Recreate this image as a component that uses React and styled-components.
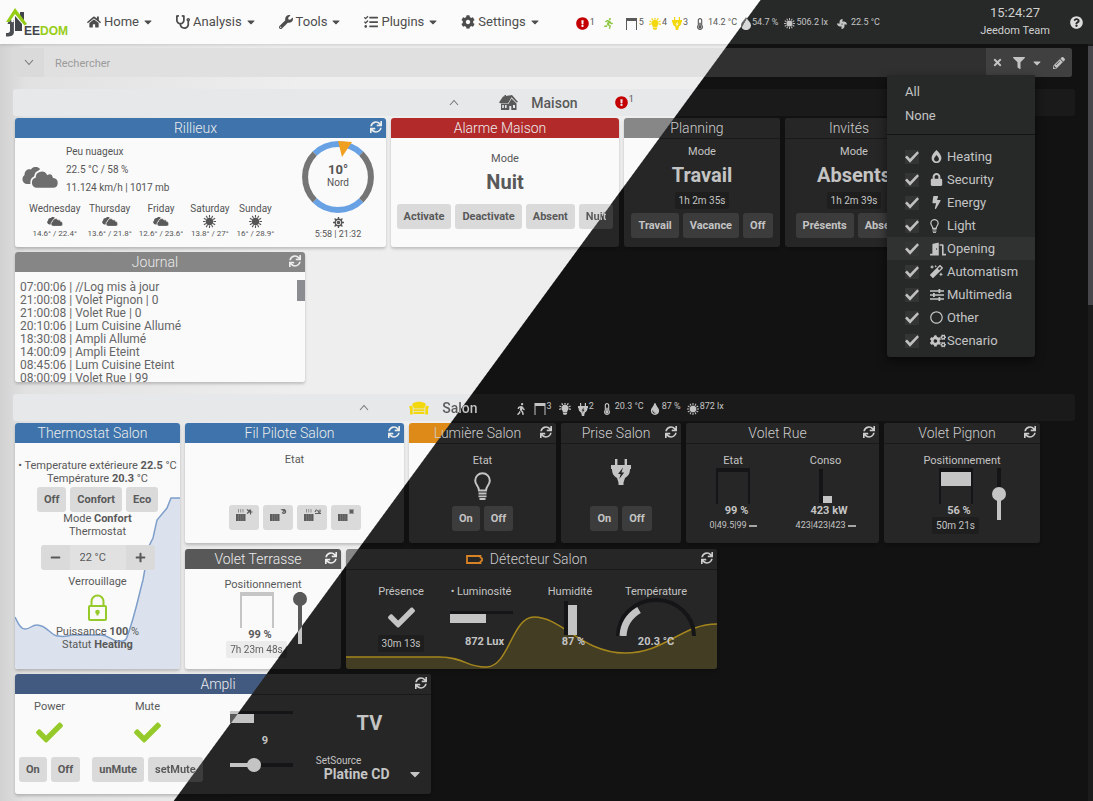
import React from "react";
import styled, { createGlobalStyle, css } from "styled-components";
import {
  FaHome, FaStethoscope, FaWrench, FaTasks, FaCog, FaCaretDown, FaExclamationCircle,
  FaRunning, FaWalking, FaThermometerHalf, FaTint, FaFan, FaQuestionCircle, FaTimes,
  FaFilter, FaPencilAlt, FaLock, FaBolt, FaDoorOpen, FaMagic, FaRegCircle, FaCogs,
  FaSync, FaCheck, FaBurn, FaMinus, FaPlus,
} from "react-icons/fa";

/* Both themes share one diagonal, anchored to the window's top left corner. */
const split = (light, dark) =>
  `linear-gradient(126.23deg, ${light} 613px, ${dark} 614px) fixed`;

const ink = { light: "#595959", dark: "#c4c4c4" };
const tone = css`color: ${(p) => p.$color || (p.$dark ? ink.dark : ink.light)};`;

const GlobalStyle = createGlobalStyle`
  *, *::before, *::after { box-sizing: border-box; }
  body {
    margin: 0;
    font: 400 11px/13px Roboto, "Liberation Sans", sans-serif;
    color: ${ink.light};
    background:
      linear-gradient(90deg, rgba(60, 62, 68, 0.16), rgba(60, 62, 68, 0.07) 26px, transparent 300px) fixed,
      ${split("#eeeeee", "#121212")};
  }
  button, input, select { font: inherit; color: inherit; margin: 0; }
  svg { display: block; flex: none; }
`;

/* ---------- page frame ---------- */
const Page = styled.div`
  min-height: 100vh;
  display: flex;
  flex-direction: column;
`;

const TopBar = styled.header`
  display: flex;
  align-items: center;
  height: 44px;
  padding: 0 10px 0 6px;
  background: ${split("#fbfbfb", "#272929")};
  box-shadow: 0 1px 3px rgba(0, 0, 0, 0.15);
`;

const Content = styled.div`
  flex: 1;
  display: flex;
`;

const Main = styled.main`
  flex: 1;
  min-width: 0;
  padding: 4px 13px 7px;
`;

const ScrollTrack = styled.div`
  width: 5px;
  padding-top: 2px;
  background: #1b1b1b;
`;

const ScrollThumb = styled.div`
  height: 259px;
  background: #47474b;
`;

/* ---------- top bar ---------- */
const Logo = styled.a`
  display: flex;
  align-items: flex-end;
  width: 62px;
  height: 29px;
  margin-right: 19px;
  text-decoration: none;
  font: 700 12px/12px "Liberation Sans", sans-serif;
  color: #414449;
  svg { margin-right: -4px; }
`;
const LogoGreen = styled.span`color: #96cd16;`;

const Nav = styled.nav`
  display: flex;
  gap: 22px;
`;

const NavLink = styled.a`
  display: flex;
  align-items: center;
  gap: 3px;
  font-size: 13px;
  line-height: 16px;
  color: #4d4d4d;
  text-decoration: none;
`;

const StatusBar = styled.div`
  display: flex;
  align-items: center;
  gap: ${(p) => p.$gap}px;
  margin-left: ${(p) => p.$ml || 0}px;
  padding-top: 3px;
`;

const Status = styled.span`
  display: flex;
  align-items: center;
  gap: ${(p) => p.$gap || 1}px;
  font-size: 9px;
  line-height: 11px;
  ${tone}
`;
const StatusValue = styled.span`
  margin-bottom: ${(p) => (p.$up ? 6 : 2)}px;
  color: ${(p) => (p.$dark ? ink.dark : ink.light)};
`;

const Clock = styled.div`
  margin-left: auto;
  text-align: center;
  line-height: 18px;
  color: #cfcfcf;
`;
const ClockTime = styled.div`font-size: 13px;`;
const ClockUser = styled.div`font-size: 11px;`;

const HelpButton = styled.button`
  margin-left: 20px;
  padding: 0;
  border: 0;
  background: none;
  color: #dcdcdc;
`;

/* ---------- search ---------- */
const SearchBar = styled.form`
  display: flex;
  height: 29px;
  margin-right: 3px;
  border-radius: 3px;
  background: ${split("#e0e0e0", "#303030")};
`;
const ExpandButton = styled.button`
  display: flex;
  align-items: center;
  justify-content: center;
  width: 31px;
  padding: 0;
  border: 0;
  border-radius: 3px 0 0 3px;
  background: #dadada;
`;
const SearchInput = styled.input`
  flex: 1;
  min-width: 0;
  padding: 1px 11px 0;
  border: 0;
  background: none;
  &::placeholder { color: #9b9b9b; opacity: 1; }
`;
const SearchTools = styled.div`
  position: relative;
  display: flex;
  align-items: center;
  width: 86px;
  padding: 0 7px 0 6px;
  justify-content: space-between;
  border-radius: 0 3px 3px 0;
  background: #404040;
  color: ${ink.dark};
`;
const ToolButton = styled.button`
  display: flex;
  align-items: center;
  gap: 6px;
  padding: 0;
  border: 0;
  background: none;
`;

const Menu = styled.div`
  position: absolute;
  z-index: 5;
  top: 27px;
  right: 37px;
  width: 148px;
  padding-bottom: 5px;
  background: #272929;
  border-radius: 0 0 3px 3px;
  box-shadow: 0 4px 10px rgba(0, 0, 0, 0.55);
  font-size: 13px;
`;
const MenuTop = styled.div`
  display: flex;
  flex-direction: column;
  padding: 4px 0 7px;
  margin-bottom: 10px;
  border-bottom: 1px solid #131515;
`;
const MenuButton = styled.button`
  height: 24px;
  padding: 0 18px;
  border: 0;
  background: none;
  text-align: left;
`;
const MenuRow = styled.label`
  display: grid;
  grid-template-columns: 25px 17px 1fr;
  align-items: center;
  height: 23px;
  padding-left: 18px;
  white-space: nowrap;
  background: ${(p) => (p.$active ? "#303131" : "none")};
`;
const CheckBox = styled.input.attrs({ type: "checkbox", defaultChecked: true })`
  appearance: none;
  width: 14px;
  height: 14px;
  background: #333434;
  &:checked::before {
    content: "";
    display: block;
    width: 14px;
    height: 14px;
    background: #c0c0c0;
    clip-path: polygon(0 55%, 14% 42%, 36% 66%, 88% 12%, 100% 25%, 36% 94%);
  }
`;

/* ---------- sections and tiles ---------- */
const SectionBar = styled.div`
  display: flex;
  align-items: center;
  justify-content: center;
  height: 27px;
  margin-top: 12px;
  padding-right: 5px;
  border-radius: 3px;
  background: ${split("#e7e8ea", "#1a1a1a")};
`;
const SectionName = styled.h2`
  margin: 0 37px 0 13px;
  font-size: 14px;
  font-weight: 500;
  line-height: 18px;
`;
const CollapseButton = styled.button`
  margin-right: 40px;
  padding: 0;
  border: 0;
  background: none;
`;

const Tiles = styled.div`
  display: flex;
  flex-wrap: ${(p) => (p.$nowrap ? "nowrap" : "wrap")};
  gap: 5px;
  padding: ${(p) => p.$pad || "0"};
`;
const TileRows = styled.div`
  display: flex;
  flex-direction: column;
  gap: 6px;
`;

const Tile = styled.section`
  position: relative;
  display: flex;
  flex-direction: column;
  flex: none;
  width: ${(p) => p.$w}px;
  height: ${(p) => p.$h || 120}px;
  border-radius: 3px;
  overflow: hidden;
  background: ${split("#fafafa", "#262626")};
  box-shadow: 0 2px 3px rgba(0, 0, 0, 0.2);
  ${tone}
`;
const TileHead = styled.header`
  position: relative;
  flex: none;
  display: flex;
  align-items: center;
  justify-content: center;
  height: 21px;
  padding-right: 10px;
  border-bottom: 1px solid transparent;
  background: ${(p) => split(p.$color, "#262626")};
  background-clip: padding-box;
`;
const HeadRule = styled.div`
  flex: none;
  height: 1px;
  margin-top: -1px;
  background: ${split("#fafafa", "#191919")};
`;
const TileTitle = styled.h3`
  display: flex;
  align-items: center;
  gap: 7px;
  margin: 0;
  font-size: 14px;
  line-height: 20px;
  font-weight: 300;
  color: ${(p) => (p.$dark ? "#cdcdcd" : "#ececec")};
`;
const RefreshButton = styled.button`
  position: absolute;
  right: 4px;
  top: 3px;
  padding: 0;
  border: 0;
  background: none;
  color: ${(p) => (p.$dark ? "#cdcdcd" : "#ececec")};
`;
const Body = styled.div`
  position: relative;
  flex: 1;
  min-height: 0;
  display: flex;
  flex-direction: column;
  align-items: center;
  padding: ${(p) => p.$pt || 0}px 0 ${(p) => p.$pb || 0}px;
`;

const Label = styled.span`white-space: nowrap;`;
const Big = styled.strong`
  margin: 5px 0;
  font-size: 20px;
  line-height: 24px;
  font-weight: 700;
`;
const Badge = styled.span`
  height: 17px;
  padding: 0 4px;
  border-radius: 2px;
  font-size: 10px;
  line-height: 17px;
  white-space: nowrap;
  background: ${split("#ececec", "#1e1e1e")};
`;
const Reading = styled.strong`
  padding-left: 7px;
  font-weight: 700;
  white-space: nowrap;
`;
const Stat = styled.span`
  display: flex;
  align-items: center;
  gap: 2px;
  margin-top: 2px;
  font-size: 9px;
`;
const Dash = styled.span`
  width: 8px;
  height: 2px;
  background: #a5a5a5;
`;
const SplitText = styled.span`
  background: ${split(ink.light, ink.dark)};
  background-clip: text;
  -webkit-background-clip: text;
  color: transparent;
`;
const Buttons = styled.div`
  display: flex;
  gap: 4px;
  margin-top: ${(p) => (p.$flow ? "2px" : "auto")};
`;
const Action = styled.button`
  height: 25px;
  padding: 0 7px;
  border: 0;
  border-radius: 3px;
  font-weight: 700;
  background: ${split("#dadada", "#3c3c3c")};
`;
const IconAction = styled(Action)`
  width: 30px;
  padding: 0 6px 4px;
`;

/* ---------- widgets ---------- */
const ShutterBox = styled.div`
  width: 34px;
  height: 36px;
  border: solid ${(p) => (p.$dark ? "#151517" : "#c5c5c5")};
  border-width: 4px 2px 0;
`;
const ShutterFill = styled.div`
  height: 14px;
  background: ${ink.dark};
`;
const VBar = styled.div`
  display: flex;
  align-items: flex-end;
`;
const VTrack = styled.div`
  width: 4px;
  height: 34px;
  background: #151517;
`;
const VFill = styled.div`
  width: 9px;
  height: ${(p) => p.$h}px;
  background: ${ink.dark};
`;
const HBar = styled.div`width: 63px;`;
const HTrack = styled.div`
  height: 3px;
  background: ${split("#c5c5c5", "#151517")};
`;
const HFill = styled.div`
  width: ${(p) => p.$w}px;
  height: 9px;
  background: ${split(ink.light, ink.dark)};
`;
const Range = styled.input.attrs({ type: "range" })`
  appearance: none;
  width: 63px;
  height: 14px;
  background: linear-gradient(90deg, ${ink.dark} 24px, #151517 24px) center / 100% 4px no-repeat;
  &::-webkit-slider-thumb {
    appearance: none;
    width: 14px;
    height: 14px;
    border-radius: 50%;
    background: ${ink.dark};
  }
`;
const VRangeShell = styled.div`
  display: flex;
  justify-content: center;
  width: 14px;
  height: 52px;
  background: ${(p) => p.$track};
  background-clip: content-box;
  padding: 0 5px;
`;
const VRange = styled.input.attrs({ type: "range" })`
  appearance: none;
  flex: none;
  writing-mode: vertical-lr;
  direction: rtl;
  width: 14px;
  height: 52px;
  background: none;
  &::-webkit-slider-thumb {
    appearance: none;
    width: 14px;
    height: 14px;
    border-radius: 50%;
    background: ${(p) => (p.$dark ? ink.dark : ink.light)};
  }
`;
const CoverRow = styled.div`
  display: flex;
  gap: 5px;
  padding-left: 6px;
  margin-top: 1px;
`;
const CoverCol = styled.div`
  display: flex;
  flex-direction: column;
  align-items: center;
  width: 62px;
`;
const Columns = styled.div`
  display: flex;
  gap: 39px;
`;
const Column = styled.div`
  display: flex;
  flex-direction: column;
  align-items: center;
`;
const SensorGrid = styled.div`
  position: relative;
  align-self: stretch;
  display: grid;
  grid-template-columns: 80px 80px 98px 74px;
  padding-left: 15px;
`;
const GaugeArea = styled.div`
  display: flex;
  align-items: ${(p) => p.$align || "center"};
  justify-content: center;
  height: 37px;
`;

const Chart = styled.svg`
  position: absolute;
  left: 0;
  bottom: 0;
`;

/* weather */
const WeatherBody = styled.div`
  display: flex;
  justify-content: space-between;
  padding: 2px 12px 0 7px;
  color: #555;
`;
const WeatherNow = styled.div`
  display: flex;
  align-items: center;
  gap: 7px;
  padding-top: 2px;
  font-size: 10px;
  line-height: 18px;
  svg { margin-top: 16px; }
`;
const Forecast = styled.div`
  display: flex;
  gap: 7px;
  padding: 6px 0 0 7px;
`;
const Day = styled.div`
  display: flex;
  flex-direction: column;
  align-items: center;
  font-size: 10px;
  line-height: 12px;
`;
const DayIcon = styled.span`
  display: flex;
  align-items: center;
  height: 13px;
`;
const DayTemp = styled.span`font-size: 8px;`;
const WindCol = styled.div`
  display: flex;
  flex-direction: column;
  align-items: center;
  font-size: 9px;
`;
const Compass = styled.div`
  display: grid;
  width: 72px;
  height: 72px;
  margin-bottom: 4px;
  > * { grid-area: 1 / 1; }
`;
const CompassText = styled.div`
  align-self: center;
  padding-bottom: 2px;
  text-align: center;
  font-size: 10px;
  line-height: 12px;
  b { display: block; font-size: 13px; line-height: 14px; }
`;

/* journal */
const LogBody = styled.div`
  display: flex;
  justify-content: space-between;
  align-items: flex-start;
  flex: 1;
  min-height: 0;
  padding: 7px 0 0 5px;
`;
const Log = styled.ul`
  margin: 0;
  padding: 1px 0 0;
  list-style: none;
  font-size: 12px;
  line-height: 13px;
  color: #666;
`;
const LogThumb = styled.div`
  width: 8px;
  height: 21px;
  background: #8b8b92;
`;

/* thermostat */
const Stepper = styled.div`
  display: flex;
  width: 114px;
  height: 25px;
  margin: 7px 0 5px;
  border-radius: 3px;
  overflow: hidden;
`;
const StepButton = styled.button`
  display: flex;
  align-items: center;
  justify-content: center;
  width: 29px;
  padding: 0;
  border: 0;
  background: #dadada;
`;
const StepValue = styled.input`
  flex: 1;
  min-width: 0;
  padding: 0 12px 0 10px;
  border: 0;
  background: #e1e1e1;
`;
const Block = styled.div`
  display: flex;
  flex-direction: column;
  align-items: center;
  svg { margin: 6px 0 4px; }
`;

/* amplifier */
const AmpBody = styled.div`
  display: flex;
  flex: 1;
  padding: 5px 8px 12px 4px;
`;
const AmpCol = styled.div`
  display: flex;
  flex-direction: column;
  align-items: center;
  margin-right: ${(p) => p.$mr || 0}px;
  ${tone}
`;
const CheckMark = styled.span`
  display: flex;
  margin-top: ${(p) => (p.$green ? 6 : 2)}px;
  color: ${(p) => (p.$green ? "#96ca2a" : ink.dark)};
`;
const Volume = styled(AmpCol)`
  padding: 11px 0 1px;
  gap: 11px;
`;
const Source = styled(AmpCol)`
  padding-top: 6px;
  width: 109px;
`;
const SourceLabel = styled.label`
  align-self: flex-start;
  margin-top: 16px;
  font-size: 10px;
  line-height: 10px;
`;
const SourceRow = styled.div`
  display: flex;
  align-items: center;
  justify-content: space-between;
  align-self: stretch;
  height: 16px;
  padding-left: 8px;
`;
const SourceSelect = styled.select`
  appearance: none;
  flex: 1;
  min-width: 0;
  height: 16px;
  padding: 0;
  border: 0;
  background: none;
  font-size: 14px;
  line-height: 16px;
  font-weight: 700;
`;

/* ---------- drawings ---------- */
const Chevron = ({ down }) => (
  <svg width="10" height="7" viewBox="0 0 10 7" fill="none" stroke="#777" strokeWidth="1.1">
    <path d={down ? "M1 1l4 4.5L9 1" : "M1 6l4-4.5L9 6"} />
  </svg>
);
const LogoMark = () => (
  <svg width="22" height="29" viewBox="0 0 22 29">
    <path d="M14 4h4v11l-4-5z" fill="#414449" />
    <path d="M9 8l7 8v7H9z" fill="#414449" />
    <path d="M3 12h5v11c0 4.500-2 5.500-8 5.500V25c3 0 4-.500 4-2.500V16H1.500z" fill="#4b4e53" />
    <path d="M0 14L9 0l12 16-2.500 1.500L9 6 3.500 14z" fill="#96cd16" />
    <circle cx="6.500" cy="13" r="1.300" fill="#fff" />
    <path d="M8.400 15v9" stroke="#fff" strokeWidth=".9" />
  </svg>
);
const ShutterIcon = ({ s = 11 }) => (
  <svg width={s} height="12" viewBox="0 0 11 12" fill="currentColor">
    <path d="M0 0h11v3H0z" /><path d="M0 3h1v9H0zM10 3h1v9h-1z" />
  </svg>
);
const rays = [0, 30, 60, 90, 120, 150, 180, 210, 240, 270, 300, 330];
const SunIcon = ({ s = 12, r = 6.5 }) => (
  <svg width={s} height={s} viewBox="0 0 24 24" fill="currentColor">
    <circle cx="12" cy="12" r={r} />
    {rays.map((a) => (
      <path key={a} d="M11 0h2v4.4h-2z" transform={`rotate(${a} 12 12)`} />
    ))}
  </svg>
);
const SunriseIcon = () => (
  <svg width="11" height="11" viewBox="0 0 24 24" fill="none" stroke="currentColor" strokeWidth="3">
    <circle cx="12" cy="12" r="7" /><circle cx="12" cy="12" r="2.4" fill="currentColor" />
    {[0, 45, 90, 135, 180, 225, 270, 315].map((a) => (
      <path key={a} d="M12 0v5" transform={`rotate(${a} 12 12)`} />
    ))}
  </svg>
);
const GlowBulb = ({ s = 12 }) => (
  <svg width={s} height={s} viewBox="0 0 24 24" fill="currentColor">
    <path d="M12 3a7.500 7.500 0 0 0-4.500 13.300V19h9v-2.700A7.500 7.500 0 0 0 12 3z" />
    <path d="M8 20h8v1.800H8zM9 22.300h6V24H9z" />
    {[-100, -68, -34, 0, 34, 68, 100].map((a) => (
      <path key={a} d="M10.700 -1.500h2.600v4h-2.600z" transform={`rotate(${a} 12 10.500)`} />
    ))}
  </svg>
);
const OutlineBulb = ({ w = 17, h = 28, sw = 2 }) => (
  <svg width={w} height={h} viewBox="0 0 17 28" fill="none" stroke="currentColor" strokeWidth={sw}>
    <path d="M5 18.500C5 14 1.200 13 1.200 8.500a7.300 7.300 0 0 1 14.600 0C15.800 13 12 14 12 18.500z" />
    <path d="M4.500 21.500h8M4.500 24.300h8M5.500 27h6" strokeWidth="1.800" />
  </svg>
);
const PlugIcon = ({ w = 11, hole = "#262626" }) => (
  <svg width={w} height={w * 1.3} viewBox="0 0 20 26" fill="currentColor">
    <path d="M4 0h2.400v7H4zM13.600 0H16v7h-2.400z" />
    <path d="M0 6h20v4h-1c0 5-2 7-5 9l-1.500 4.500V26h-5v-2.500L6 19C3 17 1 15 1 10H0z" />
    <path d="M12 8.500l-5 6.500h2.700l-1.500 5 5-6.500h-2.700z" fill={hole} />
  </svg>
);
const SplitDrop = () => (
  <svg width="10" height="13" viewBox="0 0 10 13">
    <defs>
      <linearGradient id="drop" x1="0" y1="0" x2="1" y2="0.73">
        <stop offset="0.42" stopColor="#666" /><stop offset="0.46" stopColor="#d8d8d8" />
      </linearGradient>
    </defs>
    <path d="M5 0c1 3 5 5 5 8.500A4.500 4.500 0 0 1 5 13a4.500 4.500 0 0 1-5-4.500C0 5 4 3 5 0z" fill="url(#drop)" />
  </svg>
);
const Clouds = ({ w, c = "#6e6e6e" }) => (
  <svg width={w} height={w * 0.6} viewBox="0 0 37 22" fill={c}>
    <path d="M9 17H5a5 5 0 0 1-2.500-9C2.500 3.500 6 1.500 9 2.500c2-3.500 7-3.500 9-.5L10 12z" />
    <path
      d="M14 21.500a6 6 0 0 1-1-11.500c0-7 10-8.500 12.500-3 3-1.500 5.500 0 6 3C38.500 11 38 21.500 31 21.500z"
      stroke="#fafafa" strokeWidth="1.600"
    />
  </svg>
);
const HouseIcon = () => (
  <svg width="19" height="15" viewBox="0 0 19 15" fill="currentColor">
    <path d="M0 7.500L4 1.500l1.500-.3V0H7v1l6-1 6 7-1.500.5-5-5.200L9 8.500H2z" />
    <path d="M12.500 3.500L17.500 8.500V15h-5.200v-4h-2v4H2V9h7.500z" />
    <path d="M3.200 10h1.600v3H3.200zM6 10h1.600v3H6zM14 10h2v3h-2z" fill="#e7e8ea" />
  </svg>
);
const SofaIcon = () => (
  <svg width="20" height="14" viewBox="0 0 20 14" fill="#f2d80c">
    <path d="M3.500 5V2.500C7 0 13 0 16.500 2.500V5l-1 1v1.500h-11V6z" />
    <path d="M0 5.500l2.500-1 1.200 1.500v7.500H1V8zM20 5.500l-2.500-1L16.300 6v7.500H19V8z" />
    <path d="M4.500 8.300h11v1.700h-11zM4.500 10.800h11V13h-11z" />
  </svg>
);
const LevelsIcon = () => (
  <svg width="14" height="12" viewBox="0 0 14 12" fill="currentColor">
    <path d="M0 1.300h14v1.400H0zM0 5.300h14v1.400H0zM0 9.300h14v1.400H0z" />
    <path d="M8.500 0h1.800v4H8.500zM3 4h1.800v4H3zM8.500 8h1.800v4H8.500z" />
  </svg>
);
const PadlockIcon = () => (
  <svg width="19" height="27" viewBox="0 0 19 27" fill="none" stroke="#96ca2a" strokeWidth="2">
    <path d="M3.500 12V7.500a6 6 0 0 1 12 0V12" />
    <rect x="1" y="12" width="17" height="14" rx="1" />
    <circle cx="9.500" cy="18" r="1.300" fill="#96ca2a" />
    <path d="M9.500 18v3.500" />
  </svg>
);
const marks = {
  comfort: "M12 .5l2.500 2-2.500 2M15 .5l-1.500 2.500H17.500M15.500 .5v5",
  night: "M13 .8c2.500-1 4 .5 3.500 2.500-.5 1.500-2.500 1.500-3 .5l2-2z",
  eco: "M12 4.500h6M13.500 .5l-1.500 2.500M14.500 1l2 3.500M17 .5v3",
  frost: "M12.500 .5l4 4M16.500 .5l-4 4M12.500 2.500h4M14.500 .5v4",
};
const HeaterIcon = ({ kind }) => (
  <svg width="18" height="13" viewBox="0 0 18 13" stroke="#5d5d5d" fill="none">
    <path d="M1 5h9.500v7H1z" fill="#5d5d5d" stroke="none" />
    <path d="M3.500 5v7M5.700 5v7M8 5v7" stroke="#8f8f8f" strokeWidth=".5" />
    {(kind === "comfort" || kind === "eco") && <path d="M3.500 0v3.500M5.700 0v3.500M8 0v3.500" strokeWidth=".6" />}
    <path d={marks[kind]} strokeWidth="1.200" />
  </svg>
);
const BatteryIcon = () => (
  <svg width="17" height="9" viewBox="0 0 17 9" fill="none" stroke="#d78225" strokeWidth="1.800">
    <path d="M1 1h13.500v1.500L16 3.500v2l-1.500 1V8H1z" />
  </svg>
);
const CompassRing = () => (
  <svg width="72" height="72" viewBox="0 0 72 72" fill="none" strokeWidth="6">
    <path d="M12.700 12.700a33 33 0 0 1 46.600 0M12.700 59.300a33 33 0 0 0 46.600 0" stroke="#68a1e4" />
    <path d="M12.700 12.700a33 33 0 0 0 0 46.600M59.300 12.700a33 33 0 0 1 0 46.600" stroke="#757575" />
    <path d="M36 0l14 1-10 15z" fill="#f0a020" />
  </svg>
);
const ArcGauge = () => (
  <svg width="80" height="38" viewBox="0 0 80 38" fill="none">
    <path d="M2 38a38 36 0 0 1 76 0" stroke="#151517" strokeWidth="4" />
    <path d="M7 38C7.500 27 13 18 23 12" stroke="#c4c4c4" strokeWidth="7" />
  </svg>
);

/* ---------- composed parts ---------- */
function Card({ title, color = "#878787", w, h, dark, headDark = dark, refresh, icon, back, children }) {
  return (
    <Tile $w={w} $h={h} $dark={dark}>
      <TileHead $color={color}>
        <TileTitle $dark={headDark}>{icon}{title}</TileTitle>
        {refresh && (
          <RefreshButton $dark={refresh === "dark"} aria-label={`Refresh ${title}`}>
            <FaSync size={12} />
          </RefreshButton>
        )}
      </TileHead>
      <HeadRule />
      {back}
      {children}
    </Tile>
  );
}

const Shutter = ({ dark, closed }) => (
  <ShutterBox $dark={dark}>{closed && <ShutterFill />}</ShutterBox>
);

function Collapse({ name }) {
  return <CollapseButton aria-label={`Collapse ${name}`}><Chevron /></CollapseButton>;
}

const nav = [
  ["Home", FaHome], ["Analysis", FaStethoscope], ["Tools", FaWrench],
  ["Plugins", FaTasks], ["Settings", FaCog],
];
const filters = [
  ["Heating", <FaBurn size={13} />], ["Security", <FaLock size={13} />],
  ["Energy", <FaBolt size={13} />], ["Light", <OutlineBulb w={9} h={14} sw={2.5} />],
  ["Opening", <FaDoorOpen size={16} />], ["Automatism", <FaMagic size={13} />],
  ["Multimedia", <LevelsIcon />], ["Other", <FaRegCircle size={13} />],
  ["Scenario", <FaCogs size={16} />],
];
const forecast = [
  ["Wednesday", "14.6° / 22.4°", false], ["Thursday", "13.6° / 21.8°", false],
  ["Friday", "12.6° / 23.6°", false], ["Saturday", "13.8° / 27°", true],
  ["Sunday", "16° / 28.9°", true],
];
const journal = [
  "07:00:06 | //Log mis à jour", "21:00:08 | Volet Pignon | 0", "21:00:08 | Volet Rue | 0",
  "20:10:06 | Lum Cuisine Allumé", "18:30:08 | Ampli Allumé", "14:00:09 | Ampli Eteint",
  "08:45:06 | Lum Cuisine Eteint", "08:00:09 | Volet Rue | 99",
];

const yellow = "#f2d80c";
const green = "#8cc63f";
const red = "#c40000";

export default function App() {
  return (
    <Page>
      <GlobalStyle />
      <TopBar>
        <Logo href="#" aria-label="Jeedom"><LogoMark />EE<LogoGreen>DOM</LogoGreen></Logo>
        <Nav>
          {nav.map(([name, Icon]) => (
            <NavLink href="#" key={name}><Icon size={14} />{name} <FaCaretDown size={12} /></NavLink>
          ))}
        </Nav>
        <StatusBar $ml={35} $gap={8}>
          <Status $color={red}><FaExclamationCircle size={13} /><StatusValue>1</StatusValue></Status>
          <Status $color={green}><FaRunning size={11} /></Status>
        </StatusBar>
        <StatusBar $ml={12} $gap={5}>
          <Status $gap={2}><ShutterIcon /><StatusValue>5</StatusValue></Status>
          <Status $color={yellow}><GlowBulb /><StatusValue>4</StatusValue></Status>
          <Status $color={yellow}><PlugIcon w={10} hole="#fbfbfb" /><StatusValue>3</StatusValue></Status>
        </StatusBar>
        <StatusBar $ml={6} $gap={4}>
          <Status $gap={2}><FaThermometerHalf size={12} /><StatusValue>14.2 °C</StatusValue></Status>
          <Status><SplitDrop /><StatusValue $dark>54.7 %</StatusValue></Status>
        </StatusBar>
        <StatusBar $ml={6} $gap={9}>
          <Status $dark><SunIcon s={11} /><StatusValue $dark>506.2 lx</StatusValue></Status>
          <Status $dark $gap={4}><FaFan size={10} /><StatusValue $dark>22.5 °C</StatusValue></Status>
        </StatusBar>
        <Clock>
          <ClockTime>15:24:27</ClockTime>
          <ClockUser>Jeedom Team</ClockUser>
        </Clock>
        <HelpButton aria-label="Help"><FaQuestionCircle size={13} /></HelpButton>
      </TopBar>

      <Content>
        <Main>
          <SearchBar onSubmit={(e) => e.preventDefault()}>
            <ExpandButton type="button" aria-label="Expand"><Chevron down /></ExpandButton>
            <SearchInput aria-label="Rechercher" placeholder="Rechercher" />
            <SearchTools>
              <ToolButton type="button" aria-label="Clear"><FaTimes size={11} /></ToolButton>
              <ToolButton type="button" aria-label="Filter">
                <FaFilter size={12} /><FaCaretDown size={12} />
              </ToolButton>
              <ToolButton type="button" aria-label="Edit"><FaPencilAlt size={12} /></ToolButton>
              <Menu>
                <MenuTop>
                  <MenuButton type="button">All</MenuButton>
                  <MenuButton type="button">None</MenuButton>
                </MenuTop>
                {filters.map(([name, icon]) => (
                  <MenuRow key={name} $active={name === "Opening"}>
                    <CheckBox />{icon}<span>{name}</span>
                  </MenuRow>
                ))}
              </Menu>
            </SearchTools>
          </SearchBar>

          <SectionBar>
            <Collapse name="Maison" />
            <HouseIcon />
            <SectionName>Maison</SectionName>
            <Status $color={red}><FaExclamationCircle size={13} /><StatusValue $up>1</StatusValue></Status>
          </SectionBar>

          <Tiles $pad="2px">
            <Card title="Rillieux" color="#3e74ab" w={371} h={129} refresh="light">
              <WeatherBody>
                <div>
                  <WeatherNow>
                    <Clouds w={37} />
                    <div>
                      <div>Peu nuageux</div>
                      <div>22.5 °C / 58 %</div>
                      <div>11.124 km/h | 1017 mb</div>
                    </div>
                  </WeatherNow>
                  <Forecast>
                    {forecast.map(([day, temp, sunny]) => (
                      <Day key={day}>
                        {day}
                        <DayIcon>
                          {sunny ? <SunIcon s={13} r={7} /> : <Clouds w={16} c="#5a5a5a" />}
                        </DayIcon>
                        <DayTemp>{temp}</DayTemp>
                      </Day>
                    ))}
                  </Forecast>
                </div>
                <WindCol>
                  <Compass>
                    <CompassRing />
                    <CompassText><b>10°</b>Nord</CompassText>
                  </Compass>
                  <SunriseIcon />
                  <span>5:58 | 21:32</span>
                </WindCol>
              </WeatherBody>
            </Card>

            <Card title="Alarme Maison" color="#b22a2a" w={228} h={129}>
              <Body $pt={13} $pb={18}>
                <Label>Mode</Label>
                <Big>Nuit</Big>
                <Buttons>
                  <Action>Activate</Action>
                  <Action>Deactivate</Action>
                  <Action>Absent</Action>
                  <Action><SplitText>Nuit</SplitText></Action>
                </Buttons>
              </Body>
            </Card>

            <Card title="Planning" w={156} h={129} dark>
              <Body $pt={6} $pb={9}>
                <Label>Mode</Label>
                <Big>Travail</Big>
                <Badge>1h 2m 35s</Badge>
                <Buttons>
                  <Action>Travail</Action>
                  <Action>Vacance</Action>
                  <Action>Off</Action>
                </Buttons>
              </Body>
            </Card>

            <Card title="Invités" w={138} h={129} dark>
              <Body $pt={6} $pb={9}>
                <Label>Mode</Label>
                <Big>Absents</Big>
                <Badge>1h 2m 39s</Badge>
                <Buttons>
                  <Action>Présents</Action>
                  <Action>Absents</Action>
                </Buttons>
              </Body>
            </Card>
          </Tiles>

          <Tiles $pad="3px 2px 0">
            <Card title="Journal" color="#868686" w={290} h={130} refresh="light">
              <LogBody>
                <Log>{journal.map((line) => <li key={line}>{line}</li>)}</Log>
                <LogThumb />
              </LogBody>
            </Card>
          </Tiles>

          <SectionBar>
            <Collapse name="Salon" />
            <SofaIcon />
            <SectionName><SplitText>Salon</SplitText></SectionName>
            <StatusBar $gap={7}>
              <Status $dark><FaWalking size={12} /></Status>
              <Status $dark><ShutterIcon s={12} /><StatusValue $dark $up>3</StatusValue></Status>
              <Status $dark><GlowBulb /></Status>
              <Status $dark><PlugIcon w={10} /><StatusValue $dark $up>2</StatusValue></Status>
              <Status $dark $gap={2}><FaThermometerHalf size={12} /><StatusValue $dark $up>20.3 °C</StatusValue></Status>
            </StatusBar>
            <StatusBar $ml={5} $gap={6}>
              <Status $dark><FaTint size={12} /><StatusValue $dark $up>87 %</StatusValue></Status>
              <Status $dark><SunIcon s={12} /><StatusValue $dark $up>872 lx</StatusValue></Status>
            </StatusBar>
          </SectionBar>

          <Tiles $pad="2px" $nowrap>
            <Card
              title="Thermostat Salon" color="#3e74ab" w={165} h={246}
              back={
                <Chart width="165" height="175" viewBox="0 0 165 175">
                  <path d="M0 123C4 131 6 135 10 135C16 135 16 131 22 131C32 131 36 142 43 142C52 144 54 140 62 141H86C94 141 96 147 103 147C108 148 111 147 112 143C120 122 124 100 128 86L134 52L138 44L142 26L152 14L156 4H165V175H0z" fill="#dbe2ed" />
                  <path d="M0 123C4 131 6 135 10 135C16 135 16 131 22 131C32 131 36 142 43 142C52 144 54 140 62 141H86C94 141 96 147 103 147C108 148 111 147 112 143C120 122 124 100 128 86L134 52L138 44L142 26L152 14L156 4H165" fill="none" stroke="#7f9fcb" strokeWidth="1.500" />
                </Chart>
              }
            >
              <Body $pt={15}>
                <Label>• Temperature extérieure <b>22.5</b> °C</Label>
                <Label>Température <b>20.3</b> °C</Label>
                <Buttons $flow>
                  <Action>Off</Action>
                  <Action>Confort</Action>
                  <Action>Eco</Action>
                </Buttons>
                <Label>Mode <b>Confort</b></Label>
                <Label>Thermostat</Label>
                <Stepper>
                  <StepButton aria-label="Lower"><FaMinus size={11} /></StepButton>
                  <StepValue aria-label="Thermostat" defaultValue="22 °C" />
                  <StepButton aria-label="Raise"><FaPlus size={11} /></StepButton>
                </Stepper>
                <Block>
                  <Label>Verrouillage</Label>
                  <PadlockIcon />
                  <Label>Puissance <b>100</b> %</Label>
                  <Label>Statut <b>Heating</b></Label>
                </Block>
              </Body>
            </Card>

            <TileRows>
              <Tiles $nowrap>
                <Card title="Fil Pilote Salon" color="#3e74ab" w={219} refresh="light">
                  <Body $pt={9} $pb={13}>
                    <Label>Etat</Label>
                    <Buttons>
                      {Object.keys(marks).map((kind) => (
                        <IconAction key={kind} aria-label={kind}><HeaterIcon kind={kind} /></IconAction>
                      ))}
                    </Buttons>
                  </Body>
                </Card>
                <Card title="Lumière Salon" color="#dd8a18" w={147} dark refresh="dark">
                  <Body $pt={10} $pb={12}>
                    <Label>Etat</Label>
                    <GaugeArea><OutlineBulb /></GaugeArea>
                    <Buttons><Action>On</Action><Action>Off</Action></Buttons>
                  </Body>
                </Card>
                <Card title="Prise Salon" w={120} dark refresh="dark">
                  <Body $pt={15} $pb={12}>
                    <PlugIcon w={20} />
                    <Buttons><Action>On</Action><Action>Off</Action></Buttons>
                  </Body>
                </Card>
                <Card title="Volet Rue" w={193} dark refresh="dark">
                  <Body $pt={10}>
                    <Columns>
                      <Column>
                        <Label>Etat</Label>
                        <GaugeArea><Shutter dark /></GaugeArea>
                        <Reading>99 %</Reading>
                        <Stat>0|49.5|99<Dash /></Stat>
                      </Column>
                      <Column>
                        <Label>Conso</Label>
                        <GaugeArea>
                          <VBar><VTrack /><VFill $h={7} /></VBar>
                        </GaugeArea>
                        <Reading>423 kW</Reading>
                        <Stat>423|423|423<Dash /></Stat>
                      </Column>
                    </Columns>
                  </Body>
                </Card>
                <Card title="Volet Pignon" w={156} dark refresh="dark">
                  <Body $pt={10}>
                    <Label>Positionnement</Label>
                    <CoverRow>
                      <CoverCol>
                        <Shutter dark closed />
                        <Reading>56 %</Reading>
                        <Badge>50m 21s</Badge>
                      </CoverCol>
                      <VRangeShell $track="linear-gradient(#151517 26px, #c4c4c4 26px)">
                        <VRange $dark aria-label="Volet Pignon" defaultValue={49} />
                      </VRangeShell>
                    </CoverRow>
                  </Body>
                </Card>
              </Tiles>

              <Tiles $nowrap>
                <Card title="Volet Terrasse" color="#585858" w={156} refresh="light">
                  <Body $pt={8}>
                    <Label>Positionnement</Label>
                    <CoverRow>
                      <CoverCol>
                        <Shutter />
                        <Reading>99 %</Reading>
                        <Badge><SplitText>7h 23m 48s</SplitText></Badge>
                      </CoverCol>
                      <VRangeShell $track={split(ink.light, ink.dark)}>
                        <VRange aria-label="Volet Terrasse" defaultValue={100} />
                      </VRangeShell>
                    </CoverRow>
                  </Body>
                </Card>
                <Card
                  title="Détecteur Salon" w={371} dark refresh="dark" icon={<BatteryIcon />}
                  back={
                    <Chart width="371" height="60" viewBox="0 0 371 60">
                      <path d="M0 48H93C119 48 121 59 141 58C163 57 166 8 188 8C216 8 236 44 279 44C319 44 336 15 371 15V60H0z" fill="#433d24" />
                      <path d="M0 48H93C119 48 121 59 141 58C163 57 166 8 188 8C216 8 236 44 279 44C319 44 336 15 371 15" fill="none" stroke="#a5861d" strokeWidth="1.500" />
                    </Chart>
                  }
                >
                  <Body $pt={15}>
                    <SensorGrid>
                      <Column>
                        <Label>Présence</Label>
                        <GaugeArea><CheckMark><FaCheck size={27} /></CheckMark></GaugeArea>
                        <Badge>30m 13s</Badge>
                      </Column>
                      <Column>
                        <Label>• Luminosité</Label>
                        <GaugeArea><HBar><HTrack /><HFill $w={36} /></HBar></GaugeArea>
                        <Reading>872 Lux</Reading>
                      </Column>
                      <Column>
                        <Label>Humidité</Label>
                        <GaugeArea $align="flex-end"><VBar><VTrack /><VFill $h={30} /></VBar></GaugeArea>
                        <Reading>87 %</Reading>
                      </Column>
                      <Column>
                        <Label>Température</Label>
                        <GaugeArea><ArcGauge /></GaugeArea>
                        <Label><b>20.3 °C</b></Label>
                      </Column>
                    </SensorGrid>
                  </Body>
                </Card>
              </Tiles>
            </TileRows>
          </Tiles>

          <Tiles $pad="3px 2px 0">
            <Card title="Ampli" color="#435a80" w={416} headDark={false} refresh="dark">
              <AmpBody>
                <AmpCol $mr={12}>
                  <Label>Power</Label>
                  <CheckMark $green><FaCheck size={27} /></CheckMark>
                  <Buttons><Action>On</Action><Action>Off</Action></Buttons>
                </AmpCol>
                <AmpCol $mr={27}>
                  <Label>Mute</Label>
                  <CheckMark $green><FaCheck size={27} /></CheckMark>
                  <Buttons>
                    <Action>unMute</Action>
                    <Action><SplitText>setMute</SplitText></Action>
                  </Buttons>
                </AmpCol>
                <Volume $dark $mr={23}>
                  <HBar><HTrack /><HFill $w={24} /></HBar>
                  <Reading>9</Reading>
                  <Range aria-label="Volume" defaultValue={35} />
                </Volume>
                <Source $dark>
                  <Big>TV</Big>
                  <SourceLabel htmlFor="source">SetSource</SourceLabel>
                  <SourceRow>
                    <SourceSelect id="source"><option>Platine CD</option></SourceSelect>
                    <FaCaretDown size={16} />
                  </SourceRow>
                </Source>
              </AmpBody>
            </Card>
          </Tiles>
        </Main>
        <ScrollTrack><ScrollThumb /></ScrollTrack>
      </Content>
    </Page>
  );
}
